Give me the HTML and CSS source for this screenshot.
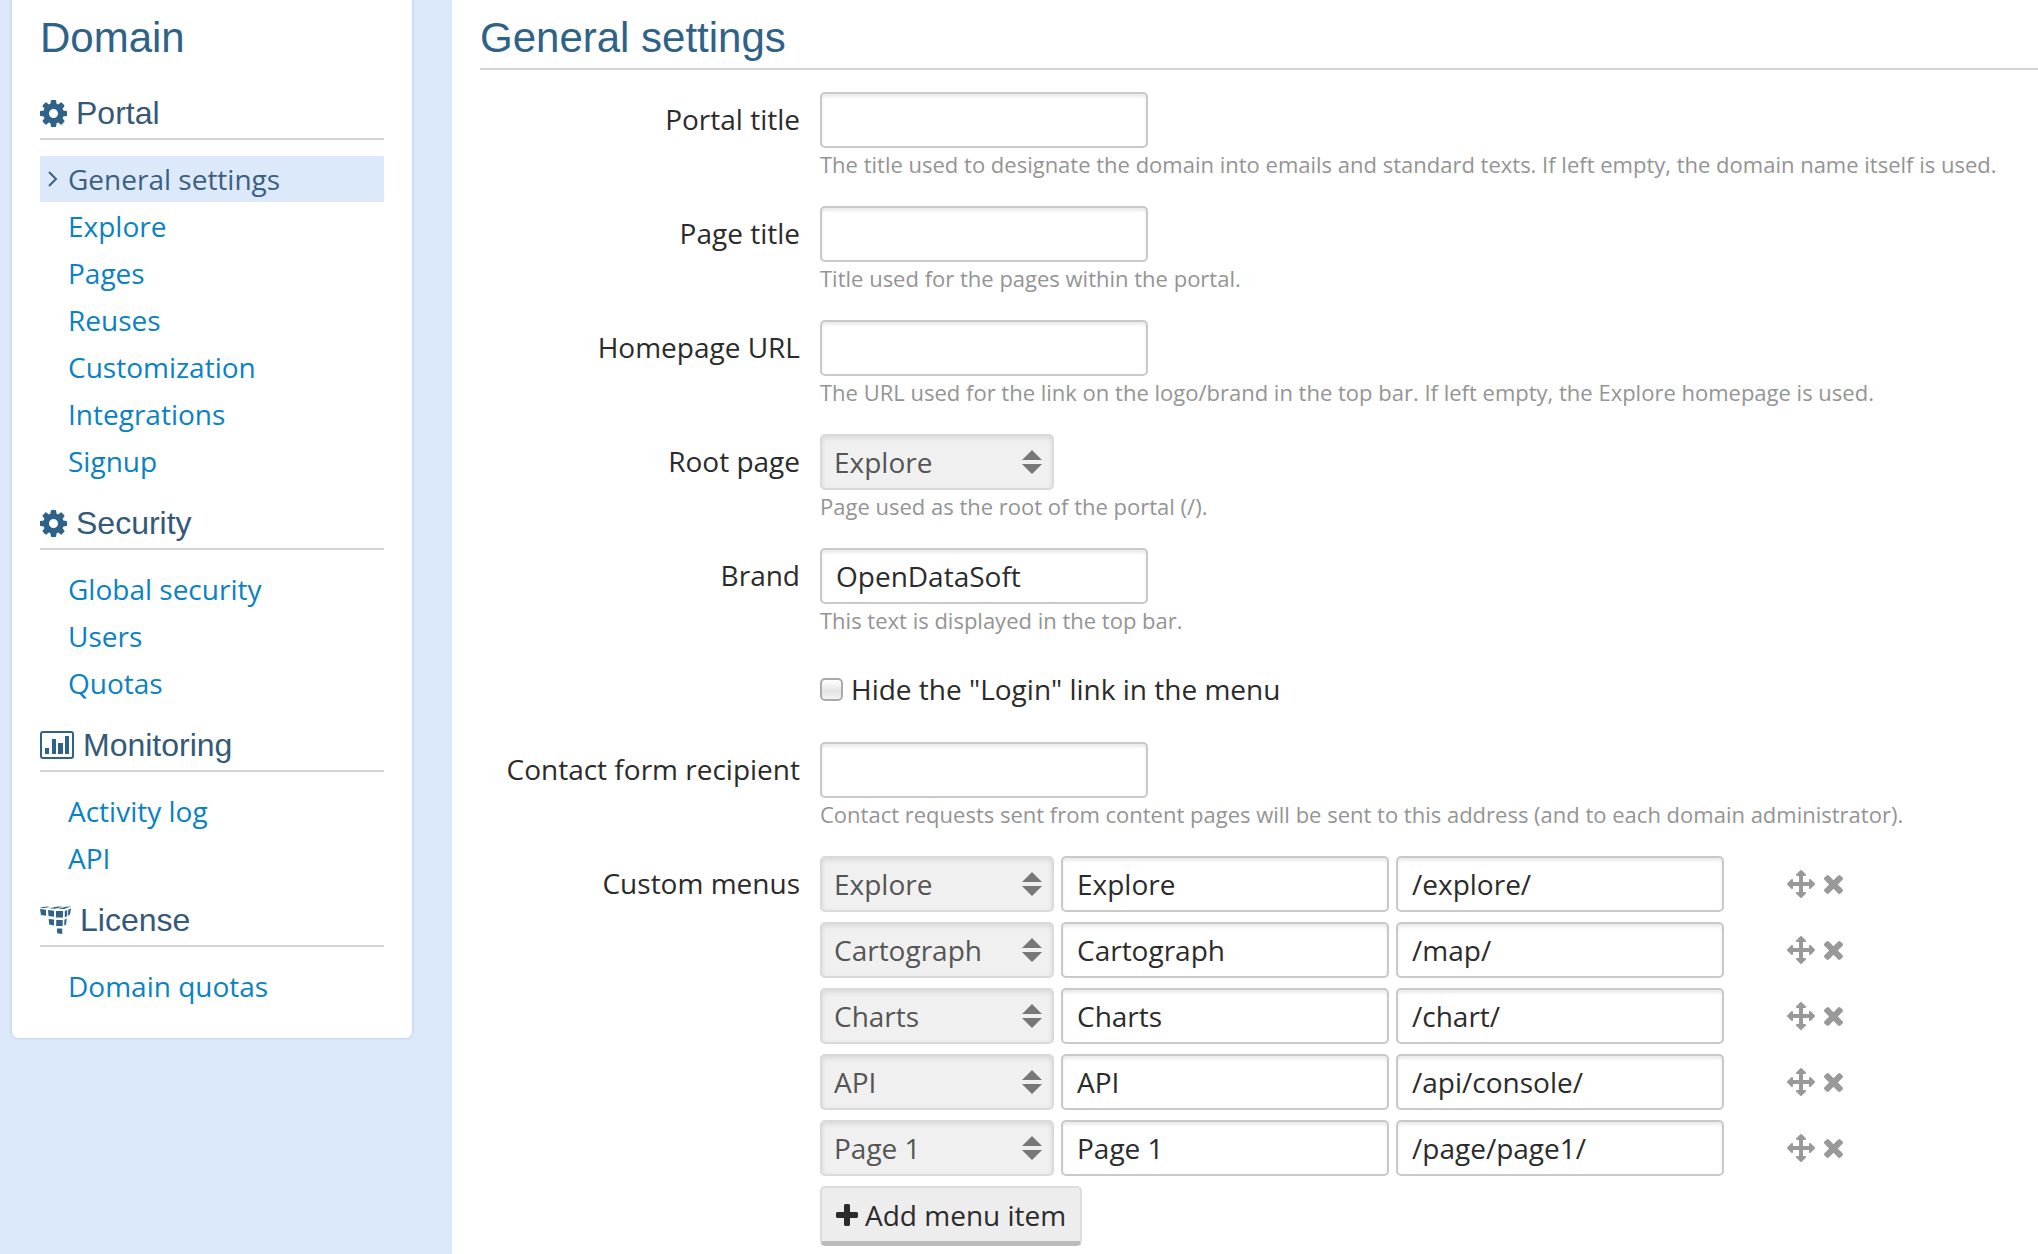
FILE: index.html
```html
<!DOCTYPE html>
<html lang="en">
<head>
<meta charset="utf-8">
<title>General settings</title>
<link rel="stylesheet" href="styles.css">
</head>
<body>
<svg class="sprite" aria-hidden="true">
  <symbol id="cog" viewBox="0 -1408 1536 1536"><path transform="scale(1,-1)" d="M1024 640q0 106 -75 181t-181 75t-181 -75t-75 -181t75 -181t181 -75t181 75t75 181zM1536 749v-222q0 -12 -8 -23t-20 -13l-185 -28q-19 -54 -39 -91q35 -50 107 -138q10 -12 10 -25t-9 -23q-27 -37 -99 -108t-94 -71q-12 0 -26 9l-138 108q-44 -23 -91 -38q-16 -136 -29 -186q-7 -28 -36 -28h-222q-14 0 -24.5 8.5t-11.5 21.5l-28 184q-49 16 -90 37l-141 -107q-10 -9 -25 -9q-14 0 -25 11q-126 114 -165 168q-7 10 -7 23q0 12 8 23q15 21 51 66.5t54 70.5q-27 50 -41 99l-183 27q-13 2 -21 12.5t-8 23.5v222q0 12 8 23t19 13l186 28q14 46 39 92q-40 57 -107 138q-10 12 -10 24q0 10 9 23q26 36 98.5 107.5t94.5 71.5q13 0 26 -10l138 -107q44 23 91 38q16 136 29 186q7 28 36 28h222q14 0 24.5 -8.5t11.5 -21.5l28 -184q49 -16 90 -37l142 107q9 9 24 9q13 0 25 -10q129 -119 165 -170q7 -8 7 -22q0 -12 -8 -23q-15 -21 -51 -66.5t-54 -70.5q26 -50 41 -98l183 -28q13 -2 21 -12.5t8 -23.5z"/></symbol>
  <symbol id="chart" viewBox="0 0 34 28"><rect x="1" y="1" width="32" height="26" rx="2" fill="none" stroke="currentColor" stroke-width="2"/><path d="M5 17h4v6H5zM12 8h4v15h-4zM18 12h5v11h-5zM25 5h4v18h-4z"/></symbol>
  <symbol id="cube" viewBox="0 0 31 28"><path d="M0 1.600l7-1.100 3 .5-7 1.300zM9 2.200l9-1.600 5 .2-8 1.900zM18 2.700l8-1.900 5-.3-7 2.600zM0 3l6 .7v6L1 9zM8 4l6 .7v6L8.500 10zM16 5h7v6.500h-7zM24.800 5l2.400-1v6l-2.400 1.400zM28.300 3.600L31 2.400l-1 6-2 1.200zM8.700 13l5.300.5v6l-4.800-1zM16.200 14h6.500v6h-6.500zM24.400 13.800l2.400-1.400-.8 6-1.800 1.200zM16.800 22.500h5.400V28l-5-.8z"/></symbol>
  <symbol id="move" viewBox="0 -1536 1792 1792"><path transform="scale(1,-1)" d="M1792 640q0 -26 -19 -45l-256 -256q-19 -19 -45 -19t-45 19t-19 45v128h-384v-384h128q26 0 45 -19t19 -45t-19 -45l-256 -256q-19 -19 -45 -19t-45 19l-256 256q-19 19 -19 45t19 45t45 19h128v384h-384v-128q0 -26 -19 -45t-45 -19t-45 19l-256 256q-19 19 -19 45t19 45l256 256q19 19 45 19t45 -19t19 -45v-128h384v384h-128q-26 0 -45 19t-19 45t19 45l256 256q19 19 45 19t45 -19l256 -256q19 -19 19 -45t-19 -45t-45 -19h-128v-384h384v128q0 26 19 45t45 19t45 -19l256 -256q19 -19 19 -45z"/></symbol>
  <symbol id="remove" viewBox="110 -1170 1188 1188"><path transform="scale(1,-1)" d="M1298 214q0 -40 -28 -68l-136 -136q-28 -28 -68 -28t-68 28l-294 294l-294 -294q-28 -28 -68 -28t-68 28l-136 136q-28 28 -28 68t28 68l294 294l-294 294q-28 28 -28 68t28 68l136 136q28 28 68 28t68 -28l294 -294l294 294q28 28 68 28t68 -28l136 -136q28 -28 28 -68t-28 -68l-294 -294l294 -294q28 -28 28 -68z"/></symbol>
  <symbol id="plus" viewBox="0 -1408 1408 1408"><path transform="scale(1,-1)" d="M1408 800v-192q0 -40 -28 -68t-68 -28h-416v-416q0 -40 -28 -68t-68 -28h-192q-40 0 -68 28t-28 68v416h-416q-40 0 -68 28t-28 68v192q0 40 28 68t68 28h416v416q0 40 28 68t68 28h192q40 0 68 -28t28 -68v-416h416q40 0 68 -28t28 -68z"/></symbol>
</svg>

<aside class="sidebar">
  <nav class="card" aria-label="Domain">
    <h1 class="title">Domain</h1>
    <h2 class="section"><svg class="icon cog"><use href="#cog"/></svg>Portal</h2>
    <ul class="links">
      <li><a class="active" href="#general"><svg class="chevron" viewBox="0 0 10 16"><path d="M1 1l7 7-7 7"/></svg>General settings</a></li>
      <li><a href="#explore">Explore</a></li>
      <li><a href="#pages">Pages</a></li>
      <li><a href="#reuses">Reuses</a></li>
      <li><a href="#customization">Customization</a></li>
      <li><a href="#integrations">Integrations</a></li>
      <li><a href="#signup">Signup</a></li>
    </ul>
    <h2 class="section"><svg class="icon cog"><use href="#cog"/></svg>Security</h2>
    <ul class="links">
      <li><a href="#security">Global security</a></li>
      <li><a href="#users">Users</a></li>
      <li><a href="#quotas">Quotas</a></li>
    </ul>
    <h2 class="section"><svg class="icon chart"><use href="#chart"/></svg>Monitoring</h2>
    <ul class="links">
      <li><a href="#activity">Activity log</a></li>
      <li><a href="#api">API</a></li>
    </ul>
    <h2 class="section"><svg class="icon cube"><use href="#cube"/></svg>License</h2>
    <ul class="links">
      <li><a href="#domain-quotas">Domain quotas</a></li>
    </ul>
  </nav>
</aside>

<main class="main" id="general">
  <h1 class="title ruled">General settings</h1>
  <form class="form">
    <div class="row">
      <label class="label" for="portal-title">Portal title</label>
      <div class="field">
        <input class="text" id="portal-title" type="text">
        <p class="help">The title used to designate the domain into emails and standard texts. If left empty, the domain name itself is used.</p>
      </div>
    </div>
    <div class="row">
      <label class="label" for="page-title">Page title</label>
      <div class="field">
        <input class="text" id="page-title" type="text">
        <p class="help">Title used for the pages within the portal.</p>
      </div>
    </div>
    <div class="row">
      <label class="label" for="homepage">Homepage URL</label>
      <div class="field">
        <input class="text" id="homepage" type="text">
        <p class="help">The URL used for the link on the logo/brand in the top bar. If left empty, the Explore homepage is used.</p>
      </div>
    </div>
    <div class="row">
      <label class="label" for="root">Root page</label>
      <div class="field">
        <select class="select" id="root"><option>Explore</option></select>
        <p class="help">Page used as the root of the portal (/).</p>
      </div>
    </div>
    <div class="row">
      <label class="label" for="brand">Brand</label>
      <div class="field">
        <input class="text" id="brand" type="text" value="OpenDataSoft">
        <p class="help">This text is displayed in the top bar.</p>
      </div>
    </div>
    <div class="row">
      <label class="check"><input class="box" type="checkbox">Hide the "Login" link in the menu</label>
    </div>
    <div class="row">
      <label class="label" for="contact">Contact form recipient</label>
      <div class="field">
        <input class="text" id="contact" type="text">
        <p class="help">Contact requests sent from content pages will be sent to this address (and to each domain administrator).</p>
      </div>
    </div>
    <div class="row">
      <label class="label" for="menu1">Custom menus</label>
      <div class="field menus">
        <div class="menu">
          <select class="select" id="menu1"><option>Explore</option></select>
          <input class="text" type="text" aria-label="Menu label" value="Explore">
          <input class="text" type="text" aria-label="Menu URL" value="/explore/">
          <div class="tools"><button class="tool" type="button" aria-label="Move"><svg class="move"><use href="#move"/></svg></button><button class="tool" type="button" aria-label="Remove"><svg class="remove"><use href="#remove"/></svg></button></div>
        </div>
        <div class="menu">
          <select class="select" aria-label="Menu type"><option>Cartograph</option></select>
          <input class="text" type="text" aria-label="Menu label" value="Cartograph">
          <input class="text" type="text" aria-label="Menu URL" value="/map/">
          <div class="tools"><button class="tool" type="button" aria-label="Move"><svg class="move"><use href="#move"/></svg></button><button class="tool" type="button" aria-label="Remove"><svg class="remove"><use href="#remove"/></svg></button></div>
        </div>
        <div class="menu">
          <select class="select" aria-label="Menu type"><option>Charts</option></select>
          <input class="text" type="text" aria-label="Menu label" value="Charts">
          <input class="text" type="text" aria-label="Menu URL" value="/chart/">
          <div class="tools"><button class="tool" type="button" aria-label="Move"><svg class="move"><use href="#move"/></svg></button><button class="tool" type="button" aria-label="Remove"><svg class="remove"><use href="#remove"/></svg></button></div>
        </div>
        <div class="menu">
          <select class="select" aria-label="Menu type"><option>API</option></select>
          <input class="text" type="text" aria-label="Menu label" value="API">
          <input class="text" type="text" aria-label="Menu URL" value="/api/console/">
          <div class="tools"><button class="tool" type="button" aria-label="Move"><svg class="move"><use href="#move"/></svg></button><button class="tool" type="button" aria-label="Remove"><svg class="remove"><use href="#remove"/></svg></button></div>
        </div>
        <div class="menu">
          <select class="select" aria-label="Menu type"><option>Page 1</option></select>
          <input class="text" type="text" aria-label="Menu label" value="Page 1">
          <input class="text" type="text" aria-label="Menu URL" value="/page/page1/">
          <div class="tools"><button class="tool" type="button" aria-label="Move"><svg class="move"><use href="#move"/></svg></button><button class="tool" type="button" aria-label="Remove"><svg class="remove"><use href="#remove"/></svg></button></div>
        </div>
        <button class="add" type="button"><svg class="plus"><use href="#plus"/></svg>Add menu item</button>
      </div>
    </div>
  </form>
</main>
</body>
</html>
```
FILE: styles.css
```css
* { box-sizing: border-box; }

body {
  margin: 0;
  min-height: 100vh;
  display: flex;
  background: #fff;
  color: #2b2b2b;
  font: 28px/46px "Open Sans", sans-serif;
}

.sprite { position: absolute; width: 0; height: 0; }
svg { fill: currentColor; flex: none; }

/* Sidebar */
.sidebar {
  flex: none;
  width: 452px;
  padding: 0 40px 0 12px;
  background: #dbe9fb;
}
.card {
  padding: 12px 28px 28px;
  background: #fff;
  border-radius: 0 0 6px 6px;
  box-shadow: 0 0 3px 1px #c3d4e6;
}
.title {
  margin: 0;
  color: #2f6289;
  font: 42px/52px "Liberation Sans", Arial, sans-serif;
}
.section {
  display: flex;
  align-items: center;
  gap: 9px;
  height: 48px;
  margin: 17px 0 0;
  padding-bottom: 4px;
  border-bottom: 2px solid #d5d5d5;
  color: #34597a;
  font: 32px/42px "Liberation Sans", Arial, sans-serif;
}
.title + .section { margin-top: 28px; }
.cog { width: 27px; height: 27px; }
.chart { width: 34px; height: 28px; }
.cube { width: 31px; height: 28px; }
.icon { color: #2f6289; }

.links { list-style: none; margin: 0; padding: 16px 0 0; }
.links li { padding-bottom: 1px; }
.links a {
  display: flex;
  align-items: center;
  padding-left: 28px;
  color: #0a82c2;
  text-decoration: none;
}
.links .active {
  gap: 10px;
  padding-left: 8px;
  background: #dbe9fb;
  color: #3d5f80;
}
.chevron { width: 10px; height: 16px; fill: none; stroke: currentColor; stroke-width: 2; }

/* Form */
.main { flex: 1; min-width: 0; padding: 12px 0 8px 28px; }
.ruled { height: 58px; border-bottom: 2px solid #d5d5d5; }
.form { display: flex; flex-direction: column; gap: 26px; padding-top: 22px; }
.row { display: grid; grid-template-columns: 320px 1fr; column-gap: 20px; }
.label { line-height: 54px; text-align: right; }
.field { min-width: 0; }
.help { margin: 0; color: #949494; font-size: 22px; line-height: 32px; }

.text, .select {
  display: block;
  height: 56px;
  border: 2px solid #c9c9c9;
  border-radius: 5px;
  font: inherit;
}
.text {
  width: 328px;
  padding: 0 14px;
  background: #fff;
  color: #2b2b2b;
  box-shadow: inset 0 3px 3px #ececec;
}
.select {
  appearance: none;
  width: 234px;
  padding: 0 12px;
  border-color: #dadada;
  background: #f0f0f0 url("data:image/svg+xml,%3Csvg xmlns='http://www.w3.org/2000/svg' width='20' height='24'%3E%3Cpath d='M0 10L10 0l10 10zM0 14h20L10 24z' fill='%23777'/%3E%3C/svg%3E") no-repeat right 10px center;
  color: #555;
  box-shadow: inset 0 2px 5px #d6d6d6;
}

.check {
  grid-column: 2;
  display: flex;
  align-items: center;
  gap: 8px;
  height: 54px;
}
.box {
  appearance: none;
  width: 23px;
  height: 23px;
  margin: 0;
  border: 2px solid #aaa;
  border-radius: 5px;
  background: linear-gradient(#fff, #e4e4e4 60%, #f4f4f4);
}

.menus { display: flex; flex-direction: column; gap: 10px; }
.menu { display: flex; gap: 7px; }
.tools { display: flex; align-items: center; gap: 9px; margin-left: 56px; }
.tool { display: flex; padding: 0; border: 0; background: none; color: #999; }
.move { width: 28px; height: 28px; }
.remove { width: 19px; height: 19px; }

.add {
  display: flex;
  align-items: center;
  align-self: flex-start;
  gap: 7px;
  height: 60px;
  padding: 1px 14px 0;
  border: 2px solid #ddd;
  border-bottom: 5px solid #bbb;
  border-radius: 5px;
  background: #ededed;
  color: #2b2b2b;
  font: inherit;
}
.plus { width: 22px; height: 22px; }
```
